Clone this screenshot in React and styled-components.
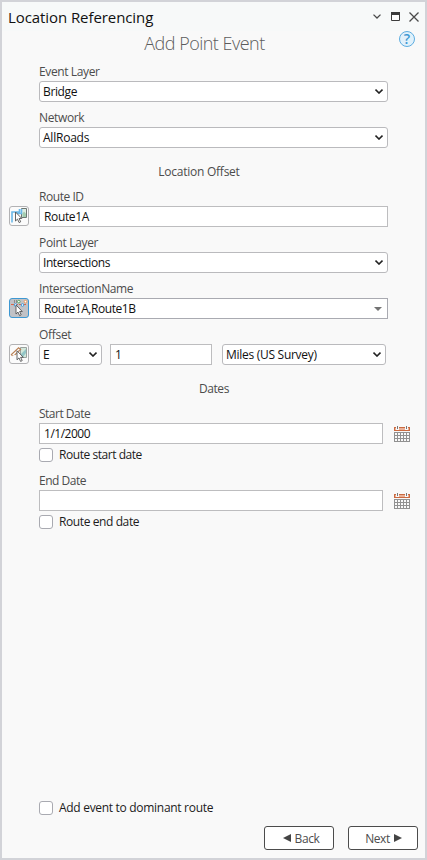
import React from 'react';
import styled, { createGlobalStyle } from 'styled-components';

export default function App() {
  return (
    <>
      <GlobalStyle />
      <Pane>
        <TitleBar>
          <Title>Location Referencing</Title>
          <WindowButtons>
            <MenuIcon />
            <MaximizeIcon />
            <CloseIcon />
          </WindowButtons>
        </TitleBar>

        <Heading>
          <HeadingText>Add Point Event</HeadingText>
          <Help>?</Help>
        </Heading>

        <Form>
          <Field>
            <Label $track={-0.38}>Event Layer</Label>
            <Select $track={-0.36}>Bridge<Chevron /></Select>
          </Field>
          <Field>
            <Label $track={-0.36}>Network</Label>
            <Select $track={-0.22}>AllRoads<Chevron /></Select>
          </Field>

          <Section $width={320} $track={-0.25}>Location Offset</Section>

          <Field>
            <Label $track={-0.45}>Route ID</Label>
            <Tool><RouteIcon /></Tool>
            <TextBox $track={-0.35}>Route1A</TextBox>
          </Field>
          <Field>
            <Label $track={-0.33}>Point Layer</Label>
            <Select $track={-0.42}>Intersections<Chevron /></Select>
          </Field>
          <Field>
            <Label $track={-0.38}>IntersectionName</Label>
            <Tool $active><IntersectionIcon /></Tool>
            <TextBox $dark $track={-0.44}>Route1A,Route1B<DropArrow /></TextBox>
          </Field>
          <Field>
            <Label $track={-0.3}>Offset</Label>
            <Tool><MeasureIcon /></Tool>
            <OffsetRow>
              <Select>E<Chevron /></Select>
              <TextBox>1</TextBox>
              <Select $track={-0.28}>Miles (US Survey)<Chevron /></Select>
            </OffsetRow>
          </Field>

          <Section $width={350} $track={-0.45}>Dates</Section>

          <Field>
            <Label $track={-0.5}>Start Date</Label>
            <DateRow>
              <TextBox $track={-0.48}>1/1/2000</TextBox>
              <CalendarIcon />
            </DateRow>
          </Field>
          <Check $track={-0.45}><Box /><CheckText>Route start date</CheckText></Check>
          <DateField>
            <Label $track={-0.47}>End Date</Label>
            <DateRow>
              <TextBox />
              <CalendarIcon />
            </DateRow>
          </DateField>
          <Check $track={-0.4}><Box /><CheckText>Route end date</CheckText></Check>
        </Form>

        <Footer>
          <Check $track={-0.3}><Box /><CheckText>Add event to dominant route</CheckText></Check>
          <Buttons>
            <Button $shift={4}>
              <svg width="8" height="8" viewBox="0 0 8 8"><path d="M8 0v8L0 4z" fill="#444" /></svg>
              Back
            </Button>
            <Button $shift={1}>
              Next
              <svg width="8" height="8" viewBox="0 0 8 8"><path d="M0 0v8l8-4z" fill="#444" /></svg>
            </Button>
          </Buttons>
        </Footer>
      </Pane>
    </>
  );
}

/* icons */

const MenuIcon = () => (
  <svg width="8" height="5" viewBox="0 0 8 5" fill="none" stroke="#4a4a4a" strokeWidth="1.3">
    <path d="M.5 .6 4 4 7.500 .6" />
  </svg>
);

const MaximizeIcon = () => (
  <svg width="9" height="9" viewBox="0 0 9 9">
    <path d="M.5 .5h8v8h-8z" fill="#fff" stroke="#3c3c3c" />
    <path d="M0 0h9v3H0z" fill="#3c3c3c" />
  </svg>
);

const CloseIcon = () => (
  <svg width="10" height="10" viewBox="0 0 10 10" fill="none" stroke="#4a4a4a" strokeWidth="1.3">
    <path d="M.5 .5l9 9M9.500 .5l-9 9" />
  </svg>
);

const Chevron = () => (
  <svg width="8" height="5" viewBox="0 0 8 5" fill="none" stroke="#222" strokeWidth="1.600">
    <path d="M.5 .6 4 4 7.500 .6" />
  </svg>
);

const DropArrow = () => (
  <svg width="8" height="4" viewBox="0 0 8 4">
    <path d="M0 0h8L4 4z" fill="#737373" />
  </svg>
);

const Cursor = () => (
  <path d="M5.500 5v9l2-1.900 1.600 3.500 1.600-.8-1.600-3.300h2.700z" fill="#fff" stroke="#555" strokeWidth=".9" />
);

const RouteIcon = () => (
  <svg width="18" height="18" viewBox="0 0 18 18">
    <path d="M11.500 1.500h5v9h-5z" fill="#dfeee5" stroke="#6d7672" />
    <path d="M12.500 10V6.500l1.500-2 2 2V10z" fill="#a3cdb0" />
    <path d="M2 15.500V5h7.500V2M6.500 9V6.500h5V2" fill="none" stroke="#6bb8e8" strokeWidth="1.600" />
    <Cursor />
  </svg>
);

const IntersectionIcon = () => (
  <svg width="18" height="18" viewBox="0 0 18 18">
    <path d="M4.500 1v3M6.500 1v3" stroke="#8b8b8b" fill="none" />
    <path d="M1 5.500h16" stroke="#df6544" strokeWidth="1.200" strokeDasharray="3 1" />
    <circle cx="8.800" cy="2.600" r="1.300" fill="#fff" stroke="#57a866" />
    <circle cx="15.500" cy="2.600" r="1.300" fill="#fff" stroke="#ee9a57" />
    <circle cx="5.500" cy="6" r="1.300" fill="#fff" stroke="#3f9bdc" />
    <circle cx="12.500" cy="6" r="1.300" fill="#fff" stroke="#3f9bdc" />
    <g transform="translate(.5 1)"><Cursor /></g>
  </svg>
);

const MeasureIcon = () => (
  <svg width="18" height="18" viewBox="0 0 18 18">
    <path d="M10.500 2.500h6v10h-6z" fill="#d3e8db" stroke="#9aa29f" />
    <path d="M11 9l5-5v4l-3 4h-2z" fill="#92c5c6" />
    <path d="M2.500 11 1.400 9.600 8.600 2.700l2 1.800L5 9.900" fill="#fff" stroke="#b98156" strokeWidth="1.200" />
    <path d="M3.500 10.500 9.500 5" stroke="#d3ad8c" strokeWidth=".8" />
    <g transform="translate(1.500 .8)"><Cursor /></g>
  </svg>
);

const CalendarIcon = () => (
  <svg width="16" height="16" viewBox="0 0 16 16" shapeRendering="crispEdges">
    <path d="M.5 1.500h15v3H.5z" fill="#eab098" stroke="#cb6a40" />
    <path d="M2 0h3v4H2zM11 0h3v4h-3z" fill="#f9f9f9" />
    <path d="M3 0h1v3H3zM12 0h1v3h-1z" fill="#777" />
    <path
      d="M0 6.500h16M0 9.500h16M0 12.500h16M0 15.500h16M.5 6v10M3.500 6v10M6.500 6v10M9.500 6v10M12.500 6v10M15.500 6v10"
      stroke="#919191"
      fill="none"
    />
  </svg>
);

/* styles */

const GlobalStyle = createGlobalStyle`
  * {
    box-sizing: border-box;
  }
  body {
    margin: 0;
    font-family: "Open Sans", "Noto Sans", sans-serif;
    font-size: 12px;
    color: #4c4c4c;
  }
  svg {
    display: block;
    flex: none;
  }
`;

const Pane = styled.div`
  display: flex;
  flex-direction: column;
  width: 427px;
  height: 860px;
  border: 2px solid #d2d3d8;
  background: #f9f9f9;
`;

const TitleBar = styled.header`
  display: flex;
  align-items: center;
  justify-content: space-between;
  height: 29px;
  padding: 0 6px 0 6px;
  background: #f7f9f9;
`;

const Title = styled.h1`
  margin: 0;
  font-size: 15px;
  font-weight: 400;
  line-height: 20px;
  letter-spacing: -0.08px;
  color: #111;
`;

const WindowButtons = styled.div`
  display: flex;
  align-items: center;
  gap: 9px;

  > :first-child {
    margin-right: 1px;
  }
`;

const Heading = styled.div`
  display: grid;
  grid-template-columns: 1fr auto 1fr;
  align-items: center;
  height: 25px;
  padding: 0 10px 0 0;
`;

const HeadingText = styled.h2`
  grid-column: 2;
  margin: 0;
  padding: 0 8px 2px 0;
  font-size: 18px;
  font-weight: 300;
  line-height: 22px;
  letter-spacing: -0.52px;
  color: #5c5c5c;
`;

const Help = styled.div`
  justify-self: end;
  align-self: start;
  width: 16px;
  height: 16px;
  border: 1px solid #5dade0;
  border-radius: 50%;
  background: #e1f1fb;
  color: #3c97d3;
  font-size: 14px;
  font-weight: 600;
  line-height: 14px;
  text-align: center;
`;

const Form = styled.div`
  display: flex;
  flex-direction: column;
  flex: 1;
  padding: 7px 0 0 7px;
`;

// left gutter for the map tool, then the label and the control
const Field = styled.div`
  display: grid;
  grid-template-columns: 30px 349px;
  grid-template-rows: 18px 21px;
  margin-bottom: 7px;
`;

const DateField = styled(Field)`
  margin-top: 10px;
`;

const Label = styled.div`
  grid-column: 2;
  line-height: 18px;
  letter-spacing: ${props => props.$track || 0}px;
`;

const Control = styled.div`
  grid-column: 2;
  display: flex;
  align-items: center;
  justify-content: space-between;
  height: 21px;
  background: #fff;
  color: #111;
  white-space: nowrap;
  letter-spacing: ${props => props.$track || 0}px;
`;

const Select = styled(Control)`
  padding: 0 4px 0 3px;
  border: 1px solid #bababd;
  border-radius: 3px;
`;

const TextBox = styled(Control)`
  padding: 0 5px 0 4px;
  border: 1px solid ${props => (props.$dark ? '#a9aab1' : '#bdbdbf')};
`;

const Tool = styled.div`
  width: 20px;
  height: 20px;
  border: 1px solid ${props => (props.$active ? '#3d98d3' : '#b2b2b4')};
  border-radius: 3px;
  background: ${props => (props.$active ? '#c1c2c6' : '#fbfbfb')};
`;

const OffsetRow = styled.div`
  grid-column: 2;
  display: grid;
  grid-template-columns: 63px 102px 164px;
  column-gap: 8px;

  > * {
    grid-column: auto;
  }
  > :last-child {
    margin-left: 2px;
    margin-right: -2px;
  }
`;

const DateRow = styled.div`
  grid-column: 2;
  display: grid;
  grid-template-columns: 344px 16px;
  column-gap: 11px;

  > * {
    grid-column: auto;
  }
  > svg {
    margin-top: 3px;
  }
`;

const Section = styled.div`
  width: ${props => props.$width}px;
  height: 32px;
  margin: 1px 0 0 30px;
  line-height: 32px;
  text-align: center;
  letter-spacing: ${props => props.$track}px;
`;

const Check = styled.label`
  display: flex;
  align-items: center;
  gap: 6px;
  height: 14px;
  margin-left: 30px;
  color: #1c1c1c;
  letter-spacing: ${props => props.$track}px;

  ${Field} + & {
    margin-top: -3px;
  }
`;

const Box = styled.span`
  width: 14px;
  height: 14px;
  border: 1px solid #a9aab1;
  border-radius: 3px;
  background: #fff;
`;

const CheckText = styled.span`
  padding-bottom: 1px;
  line-height: 15px;
`;

const Footer = styled.footer`
  padding: 0 7px 8px;
`;

const Buttons = styled.div`
  display: flex;
  justify-content: flex-end;
  gap: 14px;
  margin-top: 11px;
`;

const Button = styled.button`
  display: flex;
  align-items: center;
  justify-content: center;
  gap: 4px;
  width: 70px;
  height: 24px;
  padding: 0 0 0 ${props => props.$shift}px;
  border: 1px solid #4c4c4c;
  border-radius: 3px;
  background: #fff;
  font: inherit;
  letter-spacing: -0.4px;
  color: #4c4c4c;
`;
